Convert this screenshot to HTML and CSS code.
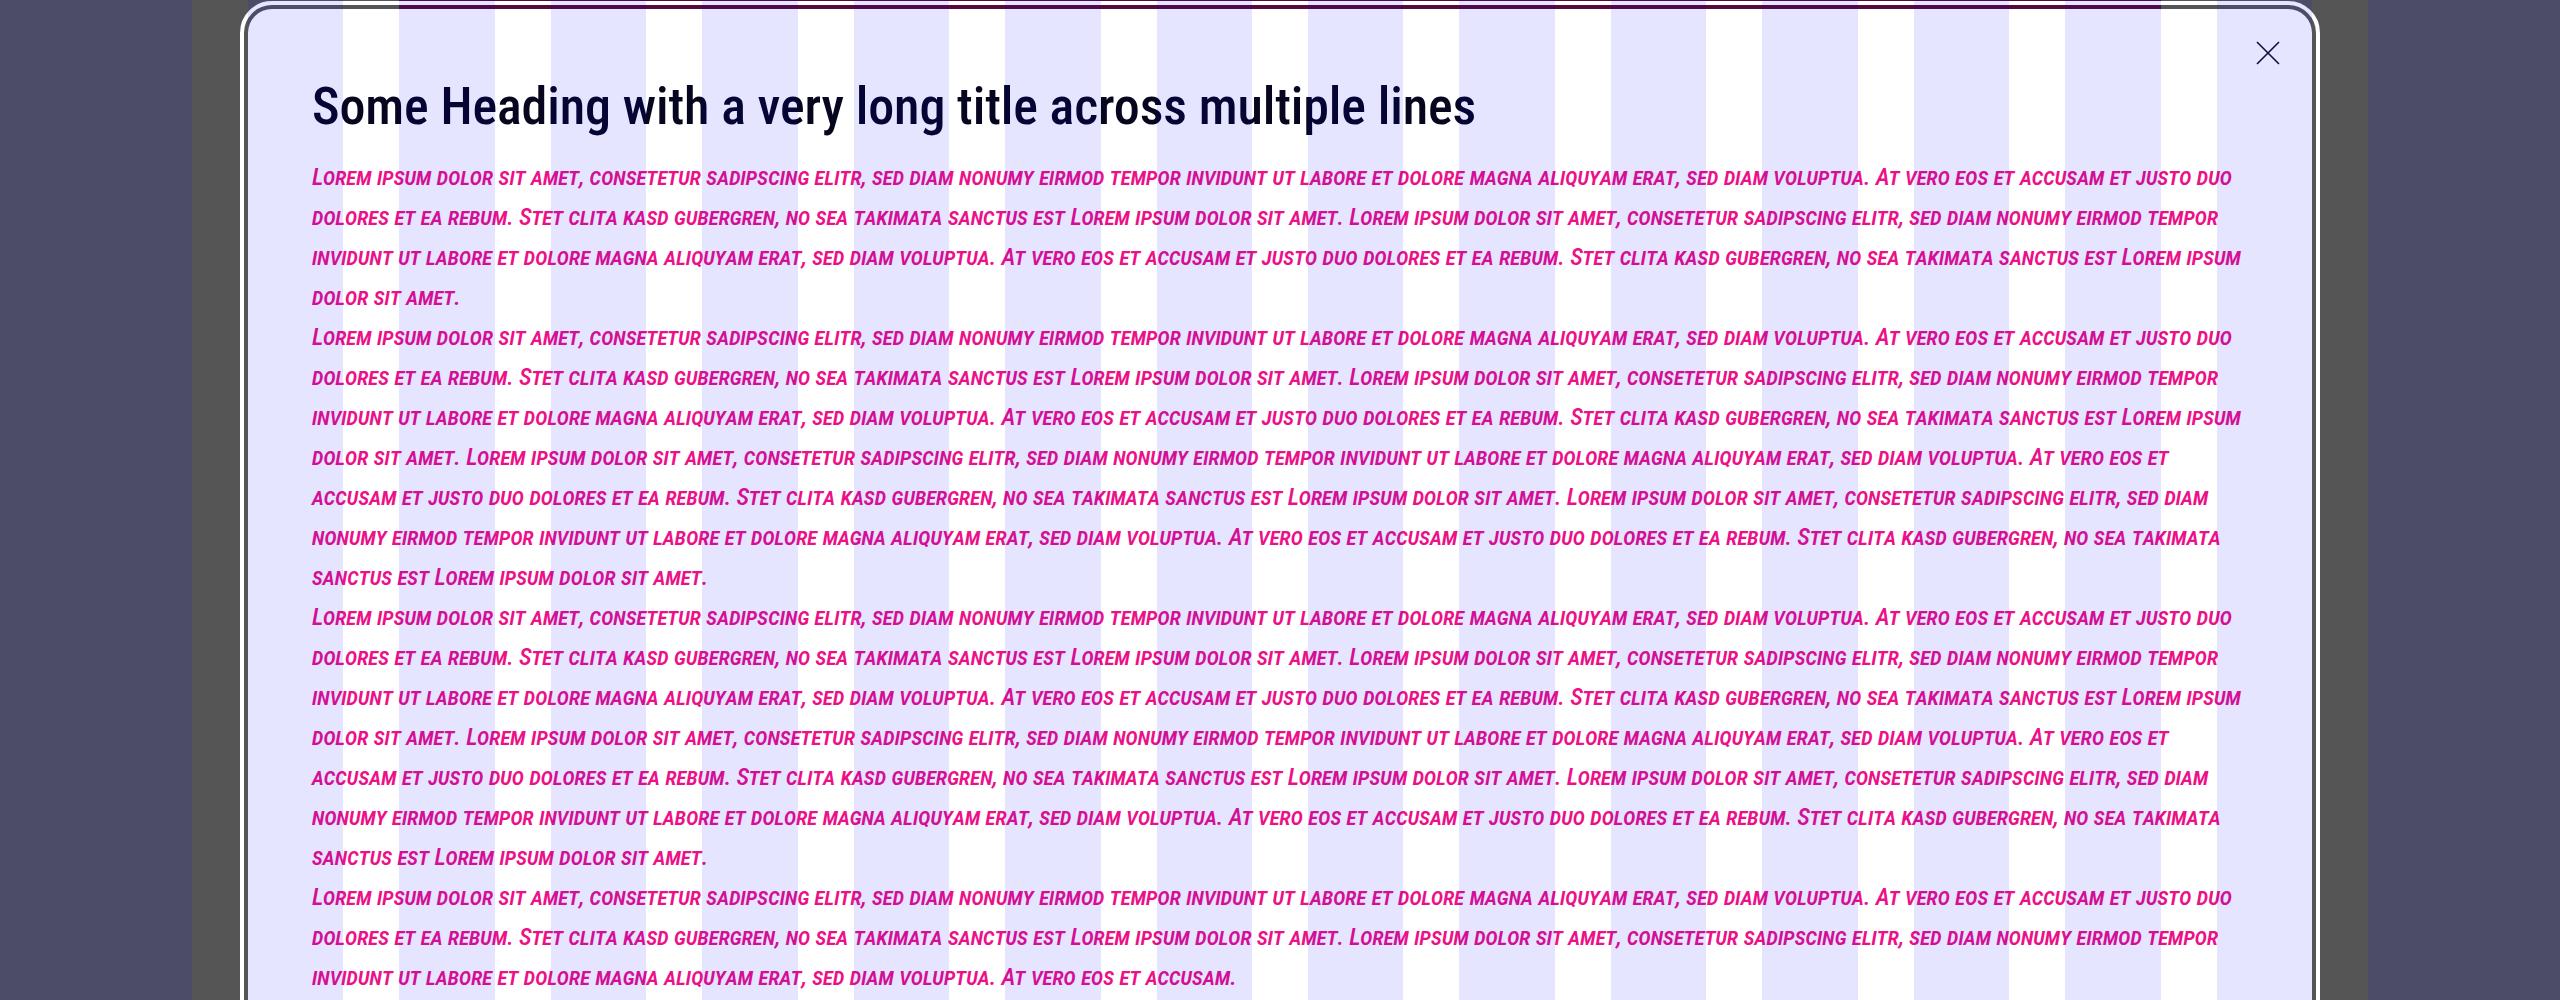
FILE: index.html
```html
<!DOCTYPE html>
<html lang="en">
<head>
<meta charset="utf-8">
<title>Modal</title>
<link rel="stylesheet" href="styles.css">
</head>
<body>
<div class="page">
  <div class="topbar"></div>
  <div class="modal" role="dialog" aria-labelledby="dlg-title">
    <button class="close" aria-label="Close">
      <svg viewBox="0 0 24 24" width="24" height="24"><path d="M1 1L23 23M23 1L1 23" fill="none" stroke="currentColor" stroke-width="1.6"/></svg>
    </button>
    <h1 id="dlg-title" class="title">Some Heading with a very long title across multiple lines</h1>
    <p class="copy">Lorem ipsum dolor sit amet, consetetur sadipscing elitr, sed diam nonumy eirmod tempor invidunt ut labore et dolore magna aliquyam erat, sed diam voluptua. At vero eos et accusam et justo duo dolores et ea rebum. Stet clita kasd gubergren, no sea takimata sanctus est Lorem ipsum dolor sit amet. Lorem ipsum dolor sit amet, consetetur sadipscing elitr, sed diam nonumy eirmod tempor invidunt ut labore et dolore magna aliquyam erat, sed diam voluptua. At vero eos et accusam et justo duo dolores et ea rebum. Stet clita kasd gubergren, no sea takimata sanctus est Lorem ipsum dolor sit amet.</p>
    <p class="copy">Lorem ipsum dolor sit amet, consetetur sadipscing elitr, sed diam nonumy eirmod tempor invidunt ut labore et dolore magna aliquyam erat, sed diam voluptua. At vero eos et accusam et justo duo dolores et ea rebum. Stet clita kasd gubergren, no sea takimata sanctus est Lorem ipsum dolor sit amet. Lorem ipsum dolor sit amet, consetetur sadipscing elitr, sed diam nonumy eirmod tempor invidunt ut labore et dolore magna aliquyam erat, sed diam voluptua. At vero eos et accusam et justo duo dolores et ea rebum. Stet clita kasd gubergren, no sea takimata sanctus est Lorem ipsum dolor sit amet. Lorem ipsum dolor sit amet, consetetur sadipscing elitr, sed diam nonumy eirmod tempor invidunt ut labore et dolore magna aliquyam erat, sed diam voluptua. At vero eos et accusam et justo duo dolores et ea rebum. Stet clita kasd gubergren, no sea takimata sanctus est Lorem ipsum dolor sit amet. Lorem ipsum dolor sit amet, consetetur sadipscing elitr, sed diam nonumy eirmod tempor invidunt ut labore et dolore magna aliquyam erat, sed diam voluptua. At vero eos et accusam et justo duo dolores et ea rebum. Stet clita kasd gubergren, no sea takimata sanctus est Lorem ipsum dolor sit amet.</p>
    <p class="copy">Lorem ipsum dolor sit amet, consetetur sadipscing elitr, sed diam nonumy eirmod tempor invidunt ut labore et dolore magna aliquyam erat, sed diam voluptua. At vero eos et accusam et justo duo dolores et ea rebum. Stet clita kasd gubergren, no sea takimata sanctus est Lorem ipsum dolor sit amet. Lorem ipsum dolor sit amet, consetetur sadipscing elitr, sed diam nonumy eirmod tempor invidunt ut labore et dolore magna aliquyam erat, sed diam voluptua. At vero eos et accusam et justo duo dolores et ea rebum. Stet clita kasd gubergren, no sea takimata sanctus est Lorem ipsum dolor sit amet. Lorem ipsum dolor sit amet, consetetur sadipscing elitr, sed diam nonumy eirmod tempor invidunt ut labore et dolore magna aliquyam erat, sed diam voluptua. At vero eos et accusam et justo duo dolores et ea rebum. Stet clita kasd gubergren, no sea takimata sanctus est Lorem ipsum dolor sit amet. Lorem ipsum dolor sit amet, consetetur sadipscing elitr, sed diam nonumy eirmod tempor invidunt ut labore et dolore magna aliquyam erat, sed diam voluptua. At vero eos et accusam et justo duo dolores et ea rebum. Stet clita kasd gubergren, no sea takimata sanctus est Lorem ipsum dolor sit amet.</p>
    <p class="copy">Lorem ipsum dolor sit amet, consetetur sadipscing elitr, sed diam nonumy eirmod tempor invidunt ut labore et dolore magna aliquyam erat, sed diam voluptua. At vero eos et accusam et justo duo dolores et ea rebum. Stet clita kasd gubergren, no sea takimata sanctus est Lorem ipsum dolor sit amet. Lorem ipsum dolor sit amet, consetetur sadipscing elitr, sed diam nonumy eirmod tempor invidunt ut labore et dolore magna aliquyam erat, sed diam voluptua. At vero eos et accusam.</p>
  </div>
</div>
<div class="grid-overlay" aria-hidden="true">
  <div class="ov-margin"></div>
  <div class="ov-cols">
    <span></span><span></span><span></span><span></span><span></span><span></span><span></span>
    <span></span><span></span><span></span><span></span><span></span><span></span><span></span>
  </div>
  <div class="ov-margin"></div>
</div>
</body>
</html>
```
FILE: styles.css
```css
html, body {
  margin: 0;
  padding: 0;
}
body {
  background: #555555;
  height: 1000px;
  overflow: hidden;
  font-family: "Roboto Condensed", "Liberation Sans Narrow", "DejaVu Sans Condensed", Roboto, sans-serif;
}
.page {
  position: relative;
  width: 2176px;
  margin: 0 auto;
  padding: 9px 56px 0;
  box-sizing: border-box;
}
.topbar {
  position: absolute;
  left: 207px;
  top: 0;
  width: 1762px;
  height: 14px;
  background: #560b3c;
  z-index: 0;
}
.modal {
  position: relative;
  z-index: 1;
  background: #ffffff;
  border-radius: 24px;
  outline: 4px solid #ffffff;
  outline-offset: 4px;
  padding: 66px 64px 64px;
  min-height: 1200px;
}
.close {
  position: absolute;
  top: 32px;
  right: 32px;
  width: 24px;
  height: 24px;
  padding: 0;
  border: 0;
  background: transparent;
  color: #10102a;
  display: flex;
}
.title {
  margin: 0 0 18px;
  font-size: 52px;
  line-height: 64px;
  font-weight: 500;
  letter-spacing: -0.1px;
  color: #06061f;
}
.copy {
  margin: 0;
  font-size: 24.5px;
  line-height: 40px;
  letter-spacing: -0.2px;
  font-style: italic;
  font-variant: small-caps;
  font-weight: 500;
  color: #ec1089;
}
.grid-overlay {
  position: fixed;
  inset: 0;
  display: flex;
  pointer-events: none;
  z-index: 10;
}
.ov-margin {
  flex: 1;
  background: rgba(0, 0, 255, 0.1);
}
.ov-cols {
  width: 2176px;
  box-sizing: border-box;
  padding: 0 56px;
  display: grid;
  grid-template-columns: repeat(14, 1fr);
  column-gap: 56px;
}
.ov-cols span {
  background: rgba(0, 0, 255, 0.1);
}
```
